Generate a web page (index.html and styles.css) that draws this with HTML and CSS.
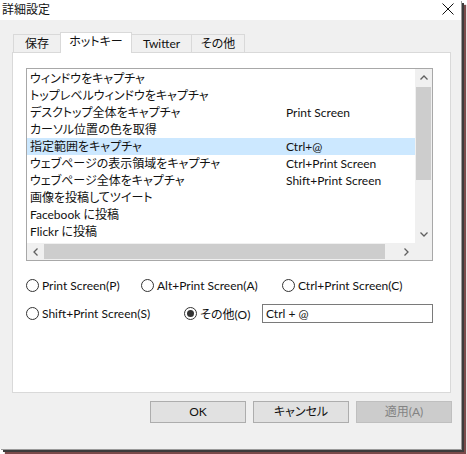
FILE: index.html
```html
<!DOCTYPE html>
<html lang="ja">
<head>
<meta charset="utf-8">
<title>詳細設定</title>
<link rel="stylesheet" href="styles.css">
</head>
<body>
<div class="window">
  <div class="titlebar">
    <span class="title">詳細設定</span>
    <svg class="close" width="12" height="12" viewBox="0 0 12 12"><path d="M0.5 0.5 L11.5 11.5 M11.5 0.5 L0.5 11.5" stroke="#111" stroke-width="1" fill="none"/></svg>
  </div>
  <div class="client">
    <div class="tabs">
      <div class="tab t1">保存</div>
      <div class="tab t2 active">ホットキー</div>
      <div class="tab t3">Twitter</div>
      <div class="tab t4">その他</div>
    </div>
    <div class="panel">
      <div class="listbox">
        <div class="rows">
          <div class="row"><span class="c1">ウィンドウをキャプチャ</span><span class="c2"></span></div>
          <div class="row"><span class="c1">トップレベルウィンドウをキャプチャ</span><span class="c2"></span></div>
          <div class="row"><span class="c1">デスクトップ全体をキャプチャ</span><span class="c2">Print Screen</span></div>
          <div class="row"><span class="c1">カーソル位置の色を取得</span><span class="c2"></span></div>
          <div class="row sel"><span class="c1">指定範囲をキャプチャ</span><span class="c2">Ctrl+@</span></div>
          <div class="row"><span class="c1">ウェブページの表示領域をキャプチャ</span><span class="c2">Ctrl+Print Screen</span></div>
          <div class="row"><span class="c1">ウェブページ全体をキャプチャ</span><span class="c2">Shift+Print Screen</span></div>
          <div class="row"><span class="c1">画像を投稿してツイート</span><span class="c2"></span></div>
          <div class="row"><span class="c1">Facebook に投稿</span><span class="c2"></span></div>
          <div class="row"><span class="c1">Flickr に投稿</span><span class="c2"></span></div>
        </div>
        <div class="vscroll">
          <div class="arrow"><svg width="8" height="5" viewBox="0 0 8 5"><path d="M0.5 4.5 L4 1 L7.5 4.5" stroke="#606060" stroke-width="1.3" fill="none"/></svg></div>
          <div class="vthumb"></div>
          <div class="vtrack"></div>
          <div class="arrow"><svg width="8" height="5" viewBox="0 0 8 5"><path d="M0.5 0.5 L4 4 L7.5 0.5" stroke="#606060" stroke-width="1.3" fill="none"/></svg></div>
        </div>
        <div class="hscroll">
          <div class="harrow"><svg width="5" height="8" viewBox="0 0 5 8"><path d="M4.5 0.5 L1 4 L4.5 7.5" stroke="#606060" stroke-width="1.3" fill="none"/></svg></div>
          <div class="hthumb"></div>
          <div class="htrack"></div>
          <div class="harrow"><svg width="5" height="8" viewBox="0 0 5 8"><path d="M0.5 0.5 L4 4 L0.5 7.5" stroke="#606060" stroke-width="1.3" fill="none"/></svg></div>
        </div>
        <div class="corner"></div>
      </div>
      <div class="radios r1">
        <label class="radio w1"><span class="circle"></span><span>Print Screen(P)</span></label>
        <label class="radio w2"><span class="circle"></span><span>Alt+Print Screen(A)</span></label>
        <label class="radio"><span class="circle"></span><span>Ctrl+Print Screen(C)</span></label>
      </div>
      <div class="radios r2">
        <label class="radio w3"><span class="circle"></span><span>Shift+Print Screen(S)</span></label>
        <label class="radio w4"><span class="circle checked"></span><span>その他(O)</span></label>
        <div class="textbox">Ctrl + @</div>
      </div>
    </div>
    <div class="buttons">
      <div class="btn">OK</div>
      <div class="btn">キャンセル</div>
      <div class="btn disabled">適用(A)</div>
    </div>
  </div>
</div>
</body>
</html>
```

FILE: styles.css
```css
* { box-sizing: border-box; }
html, body { margin: 0; padding: 0; background: #ffffff; }
body {
  width: 467px;
  height: 454px;
  overflow: hidden;
  font-family: Lato, "Noto Sans CJK JP", sans-serif;
  font-size: 12px;
  color: #111;
  font-feature-settings: "palt" 1;
}
.window {
  width: 461px;
  height: 449px;
  background: #f0f0f0;
  display: flex;
  flex-direction: column;
  box-shadow: 1px 1px 0 #9a9a9a, 3px 3px 0 #3c3c3c, 5px 5px 1px #7a4a4a;
}
.titlebar {
  height: 20px;
  background: #ffffff;
  display: flex;
  align-items: center;
  justify-content: space-between;
  padding: 0 7px 0 2px;
  line-height: 18px;
}
.title { font-size: 12px; font-feature-settings: normal; }
.close { margin-top: -2px; }
.client {
  flex: 1;
  padding: 12px 10px 0 12px;
  display: flex;
  flex-direction: column;
}
.tabs {
  height: 20px;
  display: flex;
  align-items: flex-end;
  padding-left: 1px;
  position: relative;
  z-index: 1;
}
.tab {
  height: 18px;
  border: 1px solid #d9d9d9;
  border-bottom: none;
  background: #f0f0f0;
  display: flex;
  align-items: center;
  justify-content: center;
  line-height: 16px;
  margin-right: -1px;
}
.tab.active {
  height: 21px;
  margin-bottom: -1px;
  background: #ffffff;
  padding-bottom: 2px;
}
.t1 { width: 48px; }
.t2 { width: 72px; }
.t3 { width: 61px; }
.t4 { width: 54px; }
.panel {
  height: 341px;
  background: #ffffff;
  border: 1px solid #d9d9d9;
  padding: 15px 0 0 13px;
  display: flex;
  flex-direction: column;
}
.listbox {
  width: 407px;
  height: 193px;
  border: 1px solid #a8a8a8;
  display: grid;
  grid-template-columns: 1fr 17px;
  grid-template-rows: 1fr 17px;
}
.rows {
  padding-top: 1px;
  overflow: hidden;
}
.row {
  height: 17px;
  line-height: 17px;
  display: grid;
  grid-template-columns: 256px 1fr;
  padding-left: 3px;
  white-space: nowrap;
}
.row.sel { background: #cce8ff; }
.vscroll {
  background: #f0f0f0;
  display: flex;
  flex-direction: column;
}
.arrow {
  height: 17px;
  display: flex;
  align-items: center;
  justify-content: center;
}
.vthumb {
  height: 93px;
  margin: 1px 1px 0 1px;
  background: #cdcdcd;
}
.vtrack { flex: 1; }
.hscroll {
  background: #f0f0f0;
  display: flex;
}
.harrow {
  width: 17px;
  display: flex;
  align-items: center;
  justify-content: center;
}
.hthumb {
  width: 341px;
  margin: 1px 0 1px 0;
  background: #cdcdcd;
}
.htrack { flex: 1; }
.corner { background: #f0f0f0; }
.radios {
  display: flex;
  align-items: center;
  height: 20px;
}
.r1 { margin-top: 14px; }
.r2 { margin-top: 8px; }
.radio {
  display: flex;
  align-items: center;
  gap: 3px;
  white-space: nowrap;
}
.w1 { width: 115px; }
.w2 { width: 141px; }
.w3 { width: 158px; }
.w4 { width: 78px; }
.circle {
  width: 13px;
  height: 13px;
  border-radius: 50%;
  border: 1px solid #333333;
  background: #ffffff;
  display: flex;
  align-items: center;
  justify-content: center;
  flex: none;
}
.circle.checked::after {
  content: "";
  width: 7px;
  height: 7px;
  border-radius: 50%;
  background: #333333;
}
.textbox {
  width: 171px;
  height: 19px;
  border: 1px solid #7a7a7a;
  padding-left: 3px;
  line-height: 17px;
}
.buttons {
  display: flex;
  justify-content: flex-end;
  gap: 7px;
  margin-top: 8px;
  margin-right: -1px;
}
.btn {
  width: 96px;
  height: 22px;
  border: 1px solid #adadad;
  background: #e1e1e1;
  display: flex;
  align-items: center;
  justify-content: center;
  line-height: 18px;
}
.btn.disabled {
  background: #cccccc;
  border-color: #bfbfbf;
  color: #838383;
}
```
